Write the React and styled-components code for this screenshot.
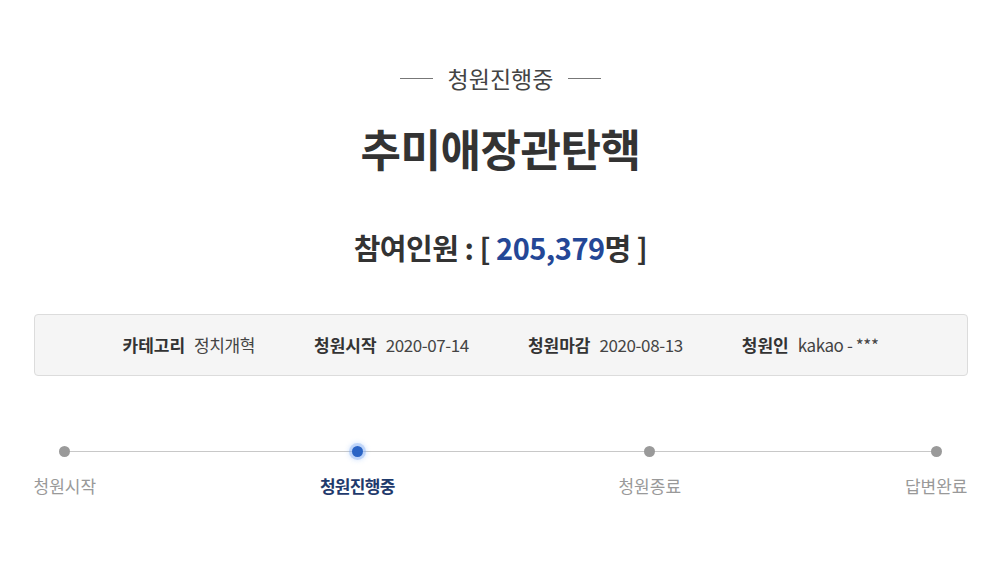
import React from "react";
import styled, { createGlobalStyle } from "styled-components";

const Global = createGlobalStyle`
  html, body { margin: 0; padding: 0; background: #fff; }
  body { font-family: "Noto Sans CJK KR", "Noto Sans", sans-serif; color: #333; }
`;

const Page = styled.div`
  width: 934px;
  margin: 0 auto;
  padding-top: 63px;
`;

const Status = styled.div`
  display: flex;
  align-items: center;
  justify-content: center;
  gap: 15px;
  font-size: 23px;
  line-height: 30px;
  color: #444;
  &::before, &::after {
    content: "";
    width: 33px;
    height: 1px;
    background: #777;
  }
`;

const Title = styled.h1`
  margin: 28px 0 0;
  text-align: center;
  font-size: 44px;
  line-height: 54px;
  font-weight: 700;
  color: #333;
  letter-spacing: -0.5px;
`;

const Count = styled.h2`
  margin: 52px 0 0;
  text-align: center;
  font-size: 29px;
  line-height: 40px;
  font-weight: 700;
  color: #333;
  letter-spacing: -0.5px;
`;

const Num = styled.span`
  color: #244796;
`;

const InfoBox = styled.ul`
  list-style: none;
  margin: 47px 0 0;
  padding: 0;
  box-sizing: border-box;
  height: 62px;
  border: 1px solid #dcdcdc;
  border-radius: 4px;
  background: #f5f5f5;
  display: flex;
  align-items: center;
  justify-content: center;
  gap: 59px;
`;

const InfoItem = styled.li`
  display: flex;
  align-items: baseline;
  gap: 9px;
  font-size: 17px;
  line-height: 24px;
`;

const Label = styled.strong`
  font-weight: 700;
  color: #333;
`;

const Value = styled.span`
  color: #444;
  letter-spacing: -0.4px;
`;

const Steps = styled.ol`
  list-style: none;
  margin: 68px 0 0;
  padding: 0;
  position: relative;
  display: flex;
  justify-content: space-between;
  &::before {
    content: "";
    position: absolute;
    left: 31px;
    right: 31px;
    top: 7px;
    height: 1px;
    background: #c8c8c8;
  }
`;

const Step = styled.li`
  position: relative;
  display: flex;
  flex-direction: column;
  align-items: center;
  gap: 17px;
  font-size: 17px;
  line-height: 24px;
  color: ${p => (p.$active ? "#1f3a6c" : "#999")};
  font-weight: ${p => (p.$active ? 700 : 400)};
  letter-spacing: ${p => (p.$active ? "-0.7px" : "0")};
`;

const Dot = styled.span`
  display: block;
  width: 11px;
  height: 11px;
  margin-top: 2px;
  border-radius: 50%;
  background: ${p => (p.$active ? "#2a64c5" : "#9a9a9a")};
  box-shadow: ${p => (p.$active ? "0 0 0 3px rgba(120,165,240,0.35), 0 0 4px 4px rgba(150,190,250,0.3)" : "none")};
`;

const steps = [
  { name: "청원시작" },
  { name: "청원진행중", active: true },
  { name: "청원종료" },
  { name: "답변완료" },
];

export default function App() {
  return (
    <>
      <Global />
      <Page>
        <Status>청원진행중</Status>
        <Title>추미애장관탄핵</Title>
        <Count>
          참여인원 : [ <Num>205,379</Num>명 ]
        </Count>
        <InfoBox>
          <InfoItem><Label>카테고리</Label><Value>정치개혁</Value></InfoItem>
          <InfoItem><Label>청원시작</Label><Value>2020-07-14</Value></InfoItem>
          <InfoItem><Label>청원마감</Label><Value>2020-08-13</Value></InfoItem>
          <InfoItem><Label>청원인</Label><Value>kakao - ***</Value></InfoItem>
        </InfoBox>
        <Steps>
          {steps.map(s => (
            <Step key={s.name} $active={s.active}>
              <Dot $active={s.active} />
              {s.name}
            </Step>
          ))}
        </Steps>
      </Page>
    </>
  );
}
